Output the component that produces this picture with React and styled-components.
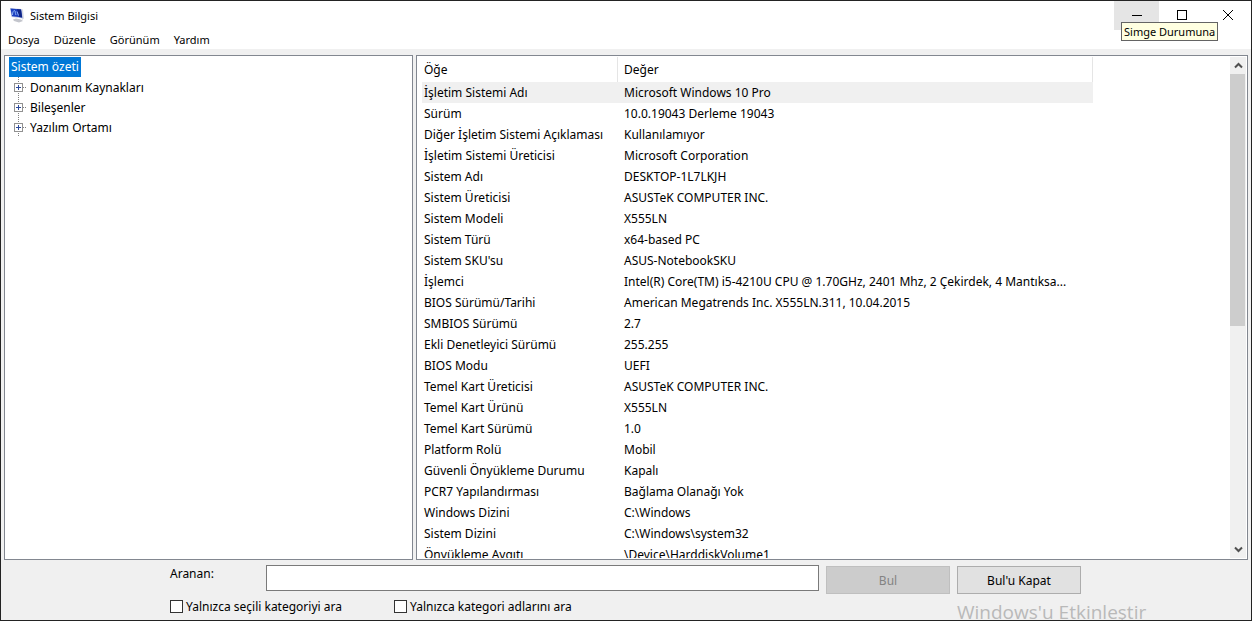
import { useState } from "react"
import styled, { createGlobalStyle } from "styled-components"

const GlobalStyle = createGlobalStyle`
    * {
        box-sizing: border-box;
    }
    body {
        margin: 0;
        background: #f0f0f0;
        color: #000;
        font-family: "Noto Sans", "Open Sans", sans-serif;
        font-size: 12px;
    }
    button, input {
        font: inherit;
        color: inherit;
    }
`;
const Window = styled.div`
    position: relative;
    height: 100vh;
    display: flex;
    flex-direction: column;
    overflow: hidden;
    border: 1px solid #232323;
    background: #f0f0f0;
`;
const TitleBar = styled.header`
    display: flex;
    align-items: flex-start;
    height: 30px;
    padding-left: 8px;
    background: #fff;
`;
const Title = styled.h1`
    flex: 1;
    display: flex;
    align-items: center;
    gap: 5px;
    height: 28px;
    margin: 0;
    font-size: 11px;
    font-weight: 400;
`;
const CaptionButton = styled.button`
    position: relative;
    display: flex;
    align-items: center;
    justify-content: center;
    width: ${props => props.$width || 45}px;
    height: 29px;
    padding: 0 0 2px;
    border: none;
    background: ${props => props.$hover ? '#e5e5e5' : 'transparent'};
`;
const Tooltip = styled.span`
    position: absolute;
    z-index: 5;
    top: 21px;
    left: 7px;
    height: 19px;
    padding: 0 2px;
    border: 1px solid #646464;
    background: #ffffe1;
    font-size: 11px;
    line-height: 17px;
    white-space: nowrap;
`;
const MenuBar = styled.nav`
    display: flex;
    gap: 14px;
    height: 18px;
    padding-left: 7px;
    background: #fff;
`;
const MenuButton = styled.button`
    padding: 0;
    border: none;
    background: none;
    font-size: 11px;
    line-height: 18px;
`;
const Panels = styled.main`
    flex: 1;
    min-height: 0;
    display: grid;
    grid-template-columns: 409fr 832fr;
    grid-template-rows: minmax(0, 1fr);
    gap: 3px;
    padding: 6px 3px 0;
`;
const Panel = styled.section`
    display: flex;
    min-width: 0;
    overflow: hidden;
    padding: 1px;
    border: 1px solid #828790;
    background: #fff;
`;
const Tree = styled.ul`
    list-style: none;
    margin: 0;
    padding: 0 3px;
`;
const Branch = styled.ul`
    list-style: none;
    margin: 0;
    padding: 0 0 0 4px;
`;
const TreeItem = styled.li`
    display: flex;
    align-items: center;
    height: 20px;
    white-space: nowrap;
`;
const Selected = styled.span`
    display: block;
    width: fit-content;
    height: 20px;
    padding: 0 2px;
    background: #0078d7;
    color: #fff;
    line-height: 20px;
`;
const Expander = styled.button`
    display: flex;
    padding: 0;
    margin-right: 3px;
    border: none;
    background: none;
`;
const TableArea = styled.div`
    flex: 1;
    min-width: 0;
    overflow: hidden;
    padding: 0 137px 0 4px;
`;
const Table = styled.table`
    width: 100%;
    table-layout: fixed;
    border-collapse: separate;
    border-spacing: 0;
    text-align: left;
`;
const HeadCell = styled.th`
    width: ${props => props.$width || 'auto'};
    height: 25px;
    padding: 0 2px 0 ${props => props.$left}px;
    border-right: 1px solid #e5e5e5;
    font-weight: 400;
`;
const Row = styled.tr`
    background: ${props => props.$selected ? '#f0f0f0' : 'transparent'};
`;
const Cell = styled.td`
    height: 21px;
    padding: 0 0 0 ${props => props.$left}px;
    line-height: 21px;
    white-space: nowrap;
    overflow: hidden;
`;
const ScrollBar = styled.div`
    display: flex;
    flex-direction: column;
    width: 16px;
    background: #f0f0f0;
`;
const ScrollButton = styled.button`
    display: flex;
    align-items: center;
    justify-content: center;
    height: 17px;
    padding: 0;
    border: none;
    background: none;
`;
const Track = styled.div`
    flex: 1;
`;
const Thumb = styled.div`
    width: 15px;
    height: 54%;
    background: #cdcdcd;
`;
const SearchForm = styled.form`
    display: grid;
    grid-template-columns: 96px minmax(0, 1fr) 131px 131px;
    width: 100%;
    max-width: 912px;
    height: 60px;
    margin: 0 auto;
    padding: 5px 1px 0 0;
    align-content: start;
`;
const SearchLabel = styled.label`
    line-height: 17px;
`;
const SearchInput = styled.input`
    height: 26px;
    padding: 0 4px;
    border: 1px solid #7a7a7a;
    background: #fff;
`;
const Button = styled.button`
    height: 28px;
    margin: 1px 0 0 7px;
    border: 1px solid #adadad;
    background: #e1e1e1;
    &:disabled {
        border-color: #bfbfbf;
        background: #ccc;
        color: #838383;
    }
`;
const Options = styled.div`
    grid-column: 1 / -1;
    display: grid;
    grid-template-columns: 224px 1fr;
    height: 24px;
`;
const Option = styled.label`
    display: flex;
    align-items: center;
    gap: 3px;
`;
const CheckBox = styled.input`
    appearance: none;
    width: 13px;
    height: 13px;
    margin: 0;
    border: 1px solid #333;
    background: #fff;
    &:checked {
        background: #333;
    }
`;
const Watermark = styled.div`
    position: absolute;
    bottom: -6px;
    left: calc(50% + 331px);
    color: #b9b9b9;
    font-family: "Open Sans", "Noto Sans", sans-serif;
    font-size: 19px;
    line-height: 28px;
    white-space: nowrap;
    pointer-events: none;
`;

const menus = ["Dosya", "Düzenle", "Görünüm", "Yardım"]
const categories = ["Donanım Kaynakları", "Bileşenler", "Yazılım Ortamı"]
const items = [
    ["İşletim Sistemi Adı", "Microsoft Windows 10 Pro"],
    ["Sürüm", "10.0.19043 Derleme 19043"],
    ["Diğer İşletim Sistemi Açıklaması", "Kullanılamıyor"],
    ["İşletim Sistemi Üreticisi", "Microsoft Corporation"],
    ["Sistem Adı", "DESKTOP-1L7LKJH"],
    ["Sistem Üreticisi", "ASUSTeK COMPUTER INC."],
    ["Sistem Modeli", "X555LN"],
    ["Sistem Türü", "x64-based PC"],
    ["Sistem SKU'su", "ASUS-NotebookSKU"],
    ["İşlemci", "Intel(R) Core(TM) i5-4210U CPU @ 1.70GHz, 2401 Mhz, 2 Çekirdek, 4 Mantıksa..."],
    ["BIOS Sürümü/Tarihi", "American Megatrends Inc. X555LN.311, 10.04.2015"],
    ["SMBIOS Sürümü", "2.7"],
    ["Ekli Denetleyici Sürümü", "255.255"],
    ["BIOS Modu", "UEFI"],
    ["Temel Kart Üreticisi", "ASUSTeK COMPUTER INC."],
    ["Temel Kart Ürünü", "X555LN"],
    ["Temel Kart Sürümü", "1.0"],
    ["Platform Rolü", "Mobil"],
    ["Güvenli Önyükleme Durumu", "Kapalı"],
    ["PCR7 Yapılandırması", "Bağlama Olanağı Yok"],
    ["Windows Dizini", "C:\\Windows"],
    ["Sistem Dizini", "C:\\Windows\\system32"],
    ["Önyükleme Aygıtı", "\\Device\\HarddiskVolume1"],
]

const AppIcon = () => (
    <svg width="16" height="16" viewBox="0 0 16 16" aria-hidden="true">
        <path d="M12 2l2 .5 1 9-2 1.500z" fill="#d9dbe2"/>
        <path d="M4 12.500l3-1 5 1 2 1.500-4 1.500-5-1.500z" fill="#c3c5cc"/>
        <path d="M1 1l11.500 1 1.500 9.500L2.500 10z" fill="#c5cde6"/>
        <path d="M1.500 1.500l10.500 1 1.200 8L3 9.200z" fill="#1b3fc0"/>
        <path d="M8 2.200l4 .3 1.200 8-3-.4z" fill="#0f2484"/>
        <path d="M3.500 8c0-3 1-4.500 2-4.500s.5 3 1.500 4.500M8 4.500l1.500 4" fill="none" stroke="#8fb4f5"/>
    </svg>
)

const PlusIcon = () => (
    <svg width="14" height="20" viewBox="0 0 14 20" shapeRendering="crispEdges" aria-hidden="true">
        <path d="M5.500 0v20M10 10.500h4" stroke="#808080" strokeDasharray="1 1"/>
        <rect x="1.500" y="6.500" width="8" height="8" fill="#fff" stroke="#919191"/>
        <path d="M3 10.500h5M5.500 8v5" stroke="#2c4a9a"/>
    </svg>
)

const Chevron = ({ down }) => (
    <svg width="9" height="7" viewBox="0 0 9 7" aria-hidden="true">
        <path d={down ? "M1 1.500l3.500 3.500L8 1.500" : "M1 5.500L4.500 2 8 5.500"} fill="none" stroke="#505050" strokeWidth="2"/>
    </svg>
)

const App = () => {
    const [search, setSearch] = useState("")
    return (
        <>
        <GlobalStyle/>
        <Window>
            <TitleBar>
                <Title><AppIcon/>Sistem Bilgisi</Title>
                <CaptionButton $hover aria-label="Simge Durumuna Küçült">
                    <svg width="10" height="10" shapeRendering="crispEdges"><path d="M0 5.500h10" stroke="#000"/></svg>
                    <Tooltip role="tooltip">Simge Durumuna</Tooltip>
                </CaptionButton>
                <CaptionButton aria-label="Ekranı Kapla">
                    <svg width="10" height="10" shapeRendering="crispEdges"><rect x="0.500" y="0.500" width="9" height="9" fill="none" stroke="#000"/></svg>
                </CaptionButton>
                <CaptionButton $width={47} aria-label="Kapat">
                    <svg width="10" height="10"><path d="M0 0l10 10M10 0L0 10" stroke="#000"/></svg>
                </CaptionButton>
            </TitleBar>
            <MenuBar>
                {menus.map((menu) => <MenuButton key={menu}>{menu}</MenuButton>)}
            </MenuBar>
            <Panels>
                <Panel>
                    <Tree>
                        <li>
                            <Selected>Sistem özeti</Selected>
                            <Branch>
                                {categories.map((category) => (
                                    <TreeItem key={category}>
                                        <Expander aria-label={category}><PlusIcon/></Expander>
                                        {category}
                                    </TreeItem>
                                ))}
                            </Branch>
                        </li>
                    </Tree>
                </Panel>
                <Panel>
                    <TableArea>
                        <Table>
                            <thead>
                                <tr>
                                    <HeadCell $left={2} $width="196px">Öğe</HeadCell>
                                    <HeadCell $left={6}>Değer</HeadCell>
                                </tr>
                            </thead>
                            <tbody>
                                {items.map(([name, value], index) => (
                                    <Row key={name} $selected={index === 0}>
                                        <Cell $left={2}>{name}</Cell>
                                        <Cell $left={6}>{value}</Cell>
                                    </Row>
                                ))}
                            </tbody>
                        </Table>
                    </TableArea>
                    <ScrollBar>
                        <ScrollButton aria-label="Yukarı"><Chevron/></ScrollButton>
                        <Track><Thumb/></Track>
                        <ScrollButton aria-label="Aşağı"><Chevron down/></ScrollButton>
                    </ScrollBar>
                </Panel>
            </Panels>
            <SearchForm onSubmit={(e) => e.preventDefault()}>
                <SearchLabel htmlFor="search">Aranan:</SearchLabel>
                <SearchInput id="search" value={search} onChange={(e) => setSearch(e.target.value)}/>
                <Button type="submit" disabled={!search}>Bul</Button>
                <Button type="button">Bul'u Kapat</Button>
                <Options>
                    <Option><CheckBox type="checkbox"/>Yalnızca seçili kategoriyi ara</Option>
                    <Option><CheckBox type="checkbox"/>Yalnızca kategori adlarını ara</Option>
                </Options>
            </SearchForm>
            <Watermark>Windows'u Etkinleştir</Watermark>
        </Window>
        </>
    )
}
export default App
